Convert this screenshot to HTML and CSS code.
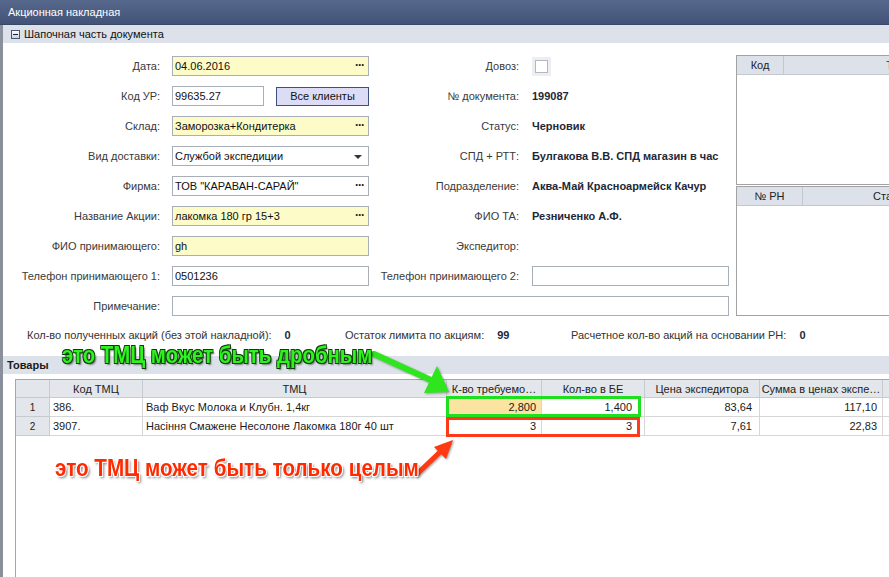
FILE: index.html
```html
<!DOCTYPE html>
<html lang="ru">
<head>
<meta charset="utf-8">
<title>Акционная накладная</title>
<link rel="stylesheet" href="styles.css">
</head>
<body>
<div class="window">
  <div class="titlebar">Акционная накладная</div>
  <div class="body">
    <div class="group-head top"><span class="collapse"></span>Шапочная часть документа</div>
    <div class="header-area">
      <div class="form">
        <div class="lbl">Дата:</div>
        <div class="fld"><div class="input yellow">04.06.2016<span class="dots">···</span></div></div>
        <div class="lbl">Довоз:</div>
        <div class="fld"><span class="check"><span class="check-in"></span></span></div>

        <div class="lbl">Код УР:</div>
        <div class="fld"><div class="input short">99635.27</div><div class="btn">Все клиенты</div></div>
        <div class="lbl">№ документа:</div>
        <div class="fld val">199087</div>

        <div class="lbl">Склад:</div>
        <div class="fld"><div class="input yellow">Заморозка+Кондитерка<span class="dots">···</span></div></div>
        <div class="lbl">Статус:</div>
        <div class="fld val">Черновик</div>

        <div class="lbl">Вид доставки:</div>
        <div class="fld"><div class="input">Службой экспедиции<span class="caret"></span></div></div>
        <div class="lbl">СПД + РТТ:</div>
        <div class="fld val">Булгакова В.В. СПД магазин в час</div>

        <div class="lbl">Фирма:</div>
        <div class="fld"><div class="input">ТОВ "КАРАВАН-САРАЙ"<span class="dots">···</span></div></div>
        <div class="lbl">Подразделение:</div>
        <div class="fld val">Аква-Май Красноармейск Качур</div>

        <div class="lbl">Название Акции:</div>
        <div class="fld"><div class="input yellow">лакомка 180 гр 15+3<span class="dots">···</span></div></div>
        <div class="lbl">ФИО ТА:</div>
        <div class="fld val">Резниченко А.Ф.</div>

        <div class="lbl">ФИО принимающего:</div>
        <div class="fld"><div class="input yellow">gh</div></div>
        <div class="lbl">Экспедитор:</div>
        <div class="fld val"></div>

        <div class="lbl">Телефон принимающего 1:</div>
        <div class="fld"><div class="input">0501236</div></div>
        <div class="lbl">Телефон принимающего 2:</div>
        <div class="fld"><div class="input"></div></div>

        <div class="lbl">Примечание:</div>
        <div class="fld wide"><div class="input"></div></div>
      </div>
      <div class="side">
        <div class="panel">
          <div class="phead"><div class="pc c-kod">Код</div><div class="pc c-type">Тип</div></div>
        </div>
        <div class="panel p2">
          <div class="phead"><div class="pc c-rn">№ РН</div><div class="pc c-stat">Статус</div></div>
        </div>
      </div>
    </div>
    <div class="stats">
      <div class="stat s1">Кол-во полученных акций (без этой накладной):<b>0</b></div>
      <div class="stat s2">Остаток лимита по акциям:<b>99</b></div>
      <div class="stat">Расчетное кол-во акций на основании РН:<b>0</b></div>
    </div>
    <div class="group-head goods">Товары</div>
    <div class="grid-wrap">
      <div class="gridbox">
        <div class="grid">
          <div class="hc"></div>
          <div class="hc">Код ТМЦ</div>
          <div class="hc">ТМЦ</div>
          <div class="hc">К-во требуемо…</div>
          <div class="hc">Кол-во в БЕ</div>
          <div class="hc">Цена экспедитора</div>
          <div class="hc">Сумма в ценах экспе…</div>
          <div class="hc"></div>

          <div class="rc">1</div>
          <div class="dc">386.</div>
          <div class="dc">Ваф Вкус Молока и Клубн. 1,4кг</div>
          <div class="dc num focus">2,800</div>
          <div class="dc num be">1,400</div>
          <div class="dc num pr">83,64</div>
          <div class="dc num">117,10</div>
          <div class="dc"></div>

          <div class="rc">2</div>
          <div class="dc">3907.</div>
          <div class="dc">Насіння Смажене Несолоне Лакомка 180г 40 шт</div>
          <div class="dc num">3</div>
          <div class="dc num be">3</div>
          <div class="dc num pr">7,61</div>
          <div class="dc num">22,83</div>
          <div class="dc"></div>
        </div>
      </div>
    </div>
  </div>

  <div class="mark mark-green"></div>
  <div class="mark mark-red"></div>
  <svg class="arrows" width="889" height="577" viewBox="0 0 889 577">
    <g class="ga">
      <line x1="374" y1="354" x2="433" y2="381" stroke="#2ee61e" stroke-width="6" stroke-linecap="round"/>
      <polygon points="449,392 424,393 437,366" fill="#2ee61e"/>
    </g>
    <g class="ra">
      <line x1="417" y1="474" x2="441" y2="451" stroke="#ff3a12" stroke-width="5" stroke-linecap="round"/>
      <polygon points="453,440 446,459 434,447" fill="#ff3a12"/>
    </g>
  </svg>
  <div class="note note-green">это ТМЦ может быть дробным</div>
  <div class="note note-red">это ТМЦ может быть только целым</div>
</div>
</body>
</html>
```

FILE: styles.css
```css
* { box-sizing: border-box; }
html, body { margin: 0; padding: 0; }
body {
  width: 889px;
  height: 577px;
  overflow: hidden;
  background: #fff;
  font-family: "Liberation Sans", Arial, sans-serif;
  font-size: 11px;
  color: #333;
}
.window {
  position: relative;
  width: 889px;
  height: 577px;
  overflow: hidden;
  display: flex;
  flex-direction: column;
}
.titlebar {
  flex: none;
  height: 25px;
  padding-left: 8px;
  display: flex;
  align-items: center;
  color: #fff;
  background: linear-gradient(#56688c, #435378);
  border-bottom: 1px solid #3a4866;
}
.body {
  flex: 1;
  min-height: 0;
  display: flex;
  flex-direction: column;
  border-left: 3px solid #8a909b;
}
.group-head {
  flex: none;
  height: 18px;
  display: flex;
  align-items: center;
  background: #dde1e9;
  color: #111;
}
.group-head.top { padding-left: 8px; }
.collapse {
  position: relative;
  width: 9px;
  height: 9px;
  margin-right: 4px;
  border: 1px solid #4b5873;
  background: linear-gradient(#fdfdfe, #c9d1de);
}
.collapse::after {
  content: "";
  position: absolute;
  left: 1px;
  right: 1px;
  top: 3px;
  height: 1px;
  background: #1d2433;
}
.header-area {
  flex: none;
  display: flex;
  padding-top: 8px;
}
.form {
  flex: none;
  display: grid;
  grid-template-columns: 169px 197px 163px 197px;
  grid-auto-rows: 30px;
}
.lbl {
  display: flex;
  align-items: center;
  justify-content: flex-end;
  padding-right: 12px;
  color: #3a3a3a;
  white-space: nowrap;
}
.lbl:nth-child(4n+3) { padding-right: 13px; }
.fld {
  display: flex;
  align-items: center;
  white-space: nowrap;
}
.fld.wide { grid-column: 2 / 5; }
.val { font-weight: bold; color: #1e2838; }
.input {
  position: relative;
  flex: 1;
  height: 20px;
  padding-left: 2px;
  display: flex;
  align-items: center;
  border: 1px solid #a9afb8;
  background: #fff;
  color: #111;
}
.input.yellow { background: #fdfbc8; }
.input.short { flex: none; width: 92px; }
.dots {
  position: absolute;
  right: 4px;
  top: 1px;
  font-weight: bold;
  font-size: 12px;
  letter-spacing: -1px;
  color: #222;
}
.caret {
  position: absolute;
  right: 6px;
  top: 8px;
  width: 0;
  height: 0;
  border-left: 4px solid transparent;
  border-right: 4px solid transparent;
  border-top: 4px solid #333;
}
.btn {
  margin-left: 12px;
  width: 95px;
  height: 19px;
  display: flex;
  align-items: center;
  justify-content: center;
  border: 1px solid #3d4f7d;
  background: #dcdcf6;
  color: #111;
}
.check {
  width: 19px;
  height: 19px;
  display: flex;
  align-items: center;
  justify-content: center;
  background: #eceef1;
}
.check-in {
  width: 13px;
  height: 13px;
  border: 1px solid #b3b8c0;
  background: #fff;
}
.side {
  flex: none;
  width: 300px;
  margin-left: 7px;
  margin-top: 4px;
  display: flex;
  flex-direction: column;
  gap: 1px;
}
.panel {
  height: 130px;
  border: 1px solid #a2a2a2;
  background: #fff;
}
.phead {
  height: 19px;
  display: flex;
  background: #dde1e9;
  border-bottom: 1px solid #c3c7ce;
}
.pc {
  display: flex;
  align-items: center;
  justify-content: center;
  border-right: 1px solid #c3c7ce;
  color: #222;
}
.c-kod { width: 47px; }
.c-type { width: 224px; }
.c-rn { width: 66px; }
.c-stat { width: 176px; }
.stats {
  flex: none;
  height: 20px;
  margin-top: 4px;
  padding-left: 24px;
  display: flex;
  align-items: center;
  color: #333;
  white-space: nowrap;
}
.stat b { margin-left: 13px; color: #1e2838; }
.s1 { width: 318px; }
.s2 { width: 226px; }
.goods {
  margin-top: 11px;
  padding-left: 4px;
  font-weight: bold;
  color: #1a1a1a;
}
.grid-wrap {
  flex: 1;
  min-height: 0;
  padding: 5px 0 0 12px;
}
.gridbox {
  height: 100%;
  border-top: 1px solid #a6a6a6;
  border-left: 1px solid #a6a6a6;
}
.grid {
  display: grid;
  grid-template-columns: 34px 93px 304px 95px 103px 115px 123px 120px;
  grid-template-rows: 18px 19px 19px;
}
.hc {
  display: flex;
  align-items: center;
  justify-content: center;
  background: #e3e6eb;
  border-right: 1px solid #c6cad1;
  border-bottom: 1px solid #c6cad1;
  color: #222;
  white-space: nowrap;
  overflow: hidden;
}
.rc {
  display: flex;
  align-items: center;
  justify-content: center;
  background: #e3e6eb;
  border-right: 1px solid #c6cad1;
  border-bottom: 1px solid #c6cad1;
  font-size: 10px;
  color: #222;
}
.dc {
  display: flex;
  align-items: center;
  padding-left: 3px;
  border-right: 1px solid #d6d6d6;
  border-bottom: 1px solid #d6d6d6;
  color: #1a1a1a;
  white-space: nowrap;
  overflow: hidden;
}
.dc.num { justify-content: flex-end; padding-right: 5px; }
.dc.be { padding-right: 12px; }
.dc.pr { padding-right: 7px; }
.dc.focus { background: #fbe3a2; }

.mark { position: absolute; }
.mark-green {
  left: 446px;
  top: 396px;
  width: 195px;
  height: 21px;
  border: 3px solid #1fe01f;
}
.mark-red {
  left: 446px;
  top: 417px;
  width: 194px;
  height: 20px;
  border: 3px solid #ff3a1a;
}
.arrows { position: absolute; left: 0; top: 0; }
.ga { filter: drop-shadow(1px 1px 1px rgba(0,0,0,0.35)); }
.ra { filter: drop-shadow(1px 1px 1px rgba(0,0,0,0.4)); }
.note {
  position: absolute;
  font-family: "Liberation Sans", Arial, sans-serif;
  font-weight: bold;
  font-size: 24px;
  line-height: 26px;
  white-space: nowrap;
  transform-origin: 0 0;
}
.note-green {
  left: 62px;
  top: 342px;
  color: #2ff21f;
  transform: scaleX(0.85);
  text-shadow: -1px -1px 0 #0d3d0d, 1px -1px 0 #0d3d0d, -1px 1px 0 #0d3d0d, 1px 1px 0 #0d3d0d, 2px 2px 2px rgba(0,0,0,0.5);
}
.note-red {
  left: 55px;
  top: 455px;
  color: #ff2a00;
  transform: scaleX(0.86);
  text-shadow: -1px -1px 0 #fff, 1px -1px 0 #fff, -1px 1px 0 #fff, 1px 1px 0 #fff, 2px 2px 3px rgba(0,0,0,0.55);
}
```
